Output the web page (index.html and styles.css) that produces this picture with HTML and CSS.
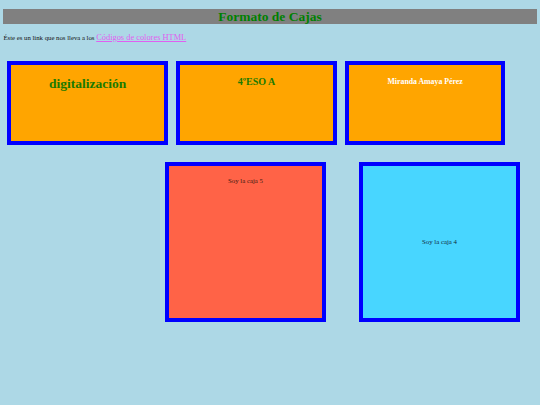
FILE: index.html
```html
<!DOCTYPE html>
<html lang="es">
<head>
<meta charset="utf-8">
<title>Formato de Cajas</title>
<link rel="stylesheet" href="styles.css">
</head>
<body>
<div class="page">
  <h1 class="title">Formato de Cajas</h1>
  <p class="intro">Éste es un link que nos lleva a los <a class="link" href="#">Códigos de colores HTML</a></p>
  <div class="row row-top">
    <div class="box box-orange"><h1 class="h-big">digitalización</h1></div>
    <div class="box box-orange"><h2 class="h-mid">4ºESO A</h2></div>
    <div class="box box-orange"><h3 class="h-small">Miranda Amaya Pérez</h3></div>
  </div>
  <div class="row row-bottom">
    <div class="box box-square box-tomato"><p class="box-text">Soy la caja 5</p></div>
    <div class="box box-square box-sky box-center"><p class="box-text flat">Soy la caja 4</p></div>
  </div>
</div>
</body>
</html>
```
FILE: styles.css
```css
html, body {
  margin: 0;
  padding: 0;
  background: #add8e6;
}
body {
  font-family: "Liberation Serif", "Times New Roman", serif;
  color: #000;
}
.page {
  padding: 0 3.4px;
}
.title {
  margin: 9px 0 0;
  height: 15px;
  line-height: 15px;
  font-size: 13.5px;
  font-weight: bold;
  text-align: center;
  color: #008000;
  background: #808080;
}
.intro {
  margin: 8.5px 0 0;
  font-size: 6.75px;
  line-height: 10px;
  height: 10px;
  color: #111;
}
.link {
  font-size: 8.4px;
  color: #e060f0;
  text-decoration: underline;
}
.row {
  display: flex;
  align-items: flex-start;
}
.row-top {
  margin-top: 18px;
  gap: 8.2px;
  padding-left: 4.1px;
}
.row-bottom {
  margin-top: 16.7px;
  padding-left: 161.6px;
  gap: 33px;
}
.box {
  box-sizing: border-box;
  border: 4.3px solid #0000ff;
  text-align: center;
}
.box-orange {
  width: 160.5px;
  height: 84.5px;
  background: #ffa500;
}
.box-square {
  width: 161px;
  height: 160px;
}
.box-tomato {
  background: #ff6347;
  padding-top: 4.2px;
}
.box-sky {
  background: #48d6ff;
}
.box-center {
  display: flex;
  align-items: center;
  justify-content: center;
}
.h-big, .h-mid, .h-small {
  margin: 0;
  line-height: 1.2;
  font-weight: bold;
}
.h-big {
  margin-top: 11.3px;
  font-size: 13.5px;
  color: #1a7a00;
}
.h-mid {
  margin-top: 11.8px;
  font-size: 10px;
  color: #1a7a00;
}
.h-small {
  margin-top: 12.6px;
  font-size: 7.8px;
  color: #ffffff;
}
.box-text {
  margin: 6.75px 0 0;
  font-size: 6.8px;
  line-height: 1.15;
  color: #3a1a10;
}
.box-text.flat {
  margin: 0;
  color: #102a40;
}
```
